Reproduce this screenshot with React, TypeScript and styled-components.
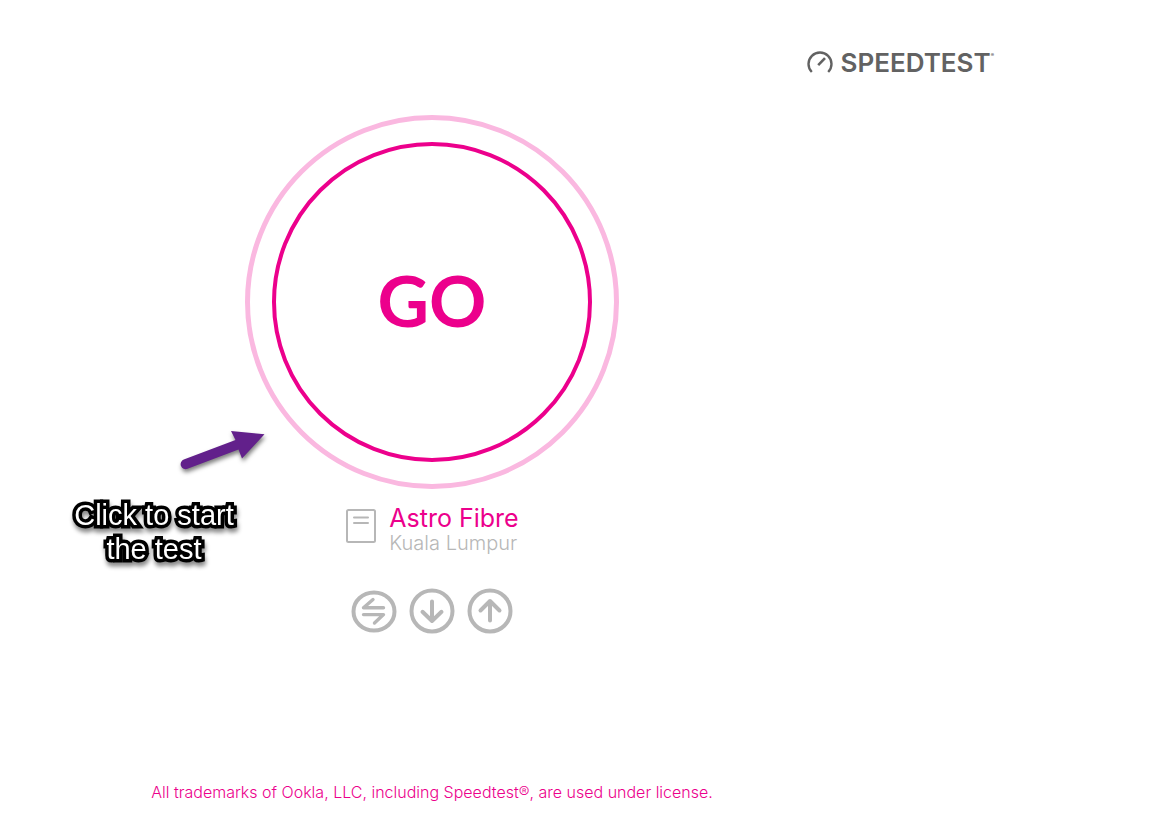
import React from "react";
import styled, { createGlobalStyle } from "styled-components";

const pink = "#ec008c";
const grey = "#b7b7b7";

const GlobalStyle = createGlobalStyle`
  * { box-sizing: border-box; }
  body {
    margin: 0;
    background: #fff;
    font-family: Inter, "Liberation Sans", sans-serif;
  }
`;

const Page = styled.div`
  min-height: 100vh;
  display: flex;
  flex-direction: column;
`;

const Header = styled.header`
  display: flex;
  justify-content: flex-end;
  padding: 47px 155px 0 0;
`;

const Brand = styled.a`
  display: flex;
  align-items: center;
  gap: 8px;
  height: 32px;
  color: #626262;
  font-size: 26px;
  font-weight: 600;
  line-height: 32px;
  text-decoration: none;
`;

const BrandIcon = styled.svg`
  margin-bottom: 2px;
`;

const BrandMark = styled.sup`
  align-self: flex-start;
  margin: 4px 0 0 -8px;
  font-size: 5px;
  line-height: 8px;
`;

const Main = styled.main`
  flex: 1;
  display: flex;
  flex-direction: column;
  align-items: center;
  margin-right: 285px;
  padding-top: 36px;
`;

const Dial = styled.div`
  position: relative;
  display: grid;
  place-items: center;
  width: 374px;
  height: 374px;
  border: 5px solid #fab8e0;
  border-radius: 50%;
`;

const GoButton = styled.button`
  width: 320px;
  height: 320px;
  padding: 0 0 4px;
  border: 4px solid ${pink};
  border-radius: 50%;
  background: none;
  color: ${pink};
  font-family: Lato, sans-serif;
  font-size: 71px;
  font-weight: 700;
  line-height: 80px;
  cursor: pointer;
`;

const Callout = styled.div`
  position: absolute;
  left: -184px;
  top: 306px;
  width: 200px;
  pointer-events: none;
`;

const CalloutArrow = styled.svg`
  display: block;
  margin-left: 114px;
  filter: drop-shadow(1px 3px 2px rgba(0, 0, 0, 0.5));
`;

const CalloutText = styled.p`
  width: 176px;
  margin: 26px 0 0;
  color: #fff;
  font-family: "Liberation Sans", Arial, sans-serif;
  font-size: 29px;
  line-height: 34px;
  text-align: center;
  -webkit-text-stroke: 7px #000;
  paint-order: stroke fill;
  stroke-linejoin: round;
  filter: drop-shadow(1px 4px 2px rgba(0, 0, 0, 0.45));
`;

const Server = styled.section`
  display: flex;
  align-items: flex-start;
  gap: 12px;
  margin-top: 16px;
`;

const Provider = styled.h1`
  margin: 0;
  color: ${pink};
  font-size: 25px;
  font-weight: 400;
  line-height: 26px;
`;

const City = styled.p`
  margin: 0;
  color: ${grey};
  font-size: 20px;
  font-weight: 300;
  line-height: 24px;
`;

const Modes = styled.div`
  display: flex;
  gap: 12px;
  margin-top: 33px;
`;

const ModeButton = styled.button`
  display: block;
  padding: 0;
  border: 0;
  background: none;
  color: ${grey};
  cursor: pointer;

  svg { display: block; }
`;

const Footer = styled.footer`
  margin-right: 285px;
  padding: 0 0 32px;
  color: ${pink};
  font-size: 16px;
  font-weight: 300;
  line-height: 20px;
  text-align: center;
`;

type ModeProps = { label: string; height?: number; children: React.ReactNode };

function Mode({ label, height = 46, children }: ModeProps) {
  return (
    <ModeButton type="button" aria-label={label}>
      <svg
        width="46"
        height={height}
        viewBox={`0 0 46 ${height}`}
        fill="none"
        stroke="currentColor"
        strokeWidth="4"
        strokeLinecap="round"
        strokeLinejoin="round"
      >
        <ellipse cx="23" cy={height / 2} rx="20.5" ry={height / 2 - 2.5} />
        {children}
      </svg>
    </ModeButton>
  );
}

export default function App() {
  return (
    <Page>
      <GlobalStyle />
      <Header>
        <Brand href="#">
          <BrandIcon width="26" height="26" viewBox="0 0 26 26" fill="none" stroke="currentColor" strokeWidth="2.4">
            <path d="M4.8 23A11.5 11.5 0 1 1 21.2 23" />
            <path d="M11.2 16.2L18 9.2" strokeWidth="2.6" />
          </BrandIcon>
          <span>SPEEDTEST</span>
          <BrandMark>®</BrandMark>
        </Brand>
      </Header>
      <Main>
        <Dial>
          <GoButton type="button">GO</GoButton>
          <Callout>
            <CalloutArrow width="90" height="46" viewBox="0 0 90 46" fill="#62208b">
              <path d="M3.8 33.5L55.5 14L51 5L84.5 8.2L62 32.5L58.5 23.5L7.5 42.8A5 5 0 0 1 3.8 33.5Z" />
            </CalloutArrow>
            <CalloutText>Click to start the test</CalloutText>
          </Callout>
        </Dial>
        <Server>
          <svg width="32" height="40" viewBox="0 0 32 40" fill="none" stroke={grey} strokeWidth="2">
            <rect x="2" y="5" width="28" height="32" rx="1.5" />
            <path d="M9 12.5H23M9 18H23" strokeLinecap="round" />
          </svg>
          <div>
            <Provider>Astro Fibre</Provider>
            <City>Kuala Lumpur</City>
          </div>
        </Server>
        <Modes>
          <Mode label="Multi connection" height={43}>
            <path d="M32.5 17.8H12.5L22 9.5M12.5 24.6H32.5L23.5 33" strokeWidth="3.4" />
          </Mode>
          <Mode label="Download">
            <path d="M23 13.5V33M13.5 23.8L23 33L32.5 23.8" />
          </Mode>
          <Mode label="Upload">
            <path d="M23 32.5V13M13.5 22.5L23 13L32.5 22.5" />
          </Mode>
        </Modes>
      </Main>
      <Footer>All trademarks of Ookla, LLC, including Speedtest®, are used under license.</Footer>
    </Page>
  );
}
